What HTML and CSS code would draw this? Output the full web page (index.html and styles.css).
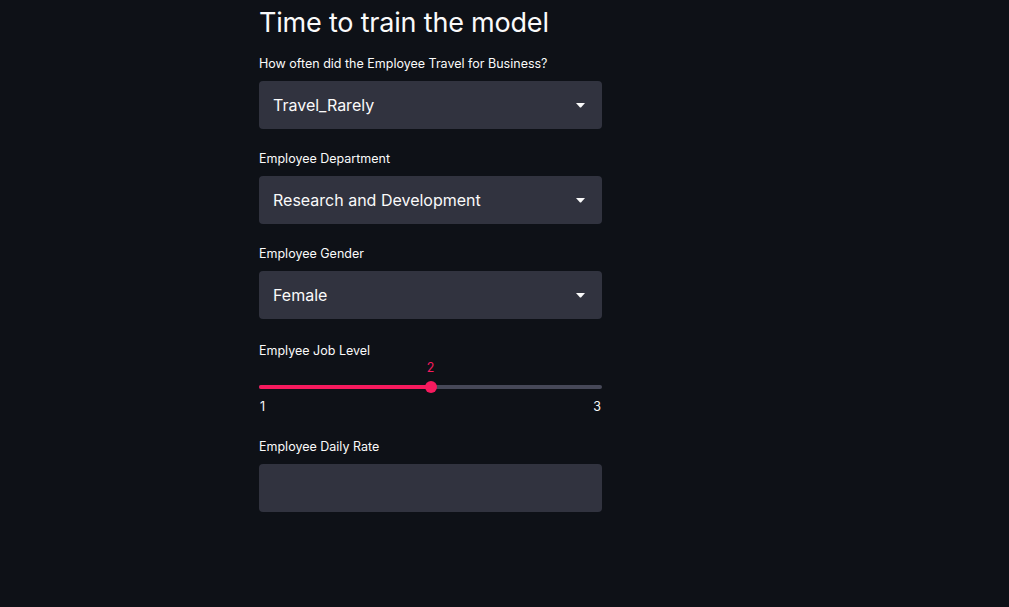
FILE: index.html
```html
<!DOCTYPE html>
<html lang="en">
<head>
<meta charset="utf-8">
<title>Time to train the model</title>
<link rel="stylesheet" href="styles.css">
</head>
<body>
<main class="main">
  <h1 class="title">Time to train the model</h1>

  <div class="field">
    <label class="label">How often did the Employee Travel for Business?</label>
    <div class="select">
      <span class="select-value">Travel_Rarely</span>
      <svg class="caret" width="9" height="5" viewBox="0 0 9 5"><path d="M0 0 H9 L5 4.5 H4 Z" fill="#fafafa"/></svg>
    </div>
  </div>

  <div class="field">
    <label class="label">Employee Department</label>
    <div class="select">
      <span class="select-value">Research and Development</span>
      <svg class="caret" width="9" height="5" viewBox="0 0 9 5"><path d="M0 0 H9 L5 4.5 H4 Z" fill="#fafafa"/></svg>
    </div>
  </div>

  <div class="field">
    <label class="label">Employee Gender</label>
    <div class="select">
      <span class="select-value">Female</span>
      <svg class="caret" width="9" height="5" viewBox="0 0 9 5"><path d="M0 0 H9 L5 4.5 H4 Z" fill="#fafafa"/></svg>
    </div>
  </div>

  <div class="field slider-field">
    <label class="label">Emplyee Job Level</label>
    <div class="slider">
      <div class="slider-value-row">
        <span class="slider-value" style="left: 50%">2</span>
      </div>
      <div class="track">
        <div class="track-fill" style="width: 50%"></div>
        <div class="thumb" style="left: 50%"></div>
      </div>
      <div class="ticks">
        <span>1</span>
        <span>3</span>
      </div>
    </div>
  </div>

  <div class="field">
    <label class="label">Employee Daily Rate</label>
    <div class="input"></div>
  </div>
</main>
</body>
</html>
```

FILE: styles.css
```css
html, body {
  margin: 0;
  padding: 0;
  background: #0e1117;
  height: 100%;
}

body {
  font-family: "Inter", "Noto Sans", sans-serif;
  color: #fafafa;
}

.main {
  width: 343px;
  margin-left: 259px;
  display: flex;
  flex-direction: column;
  gap: 20px;
}

.title {
  margin: 0 0 -6px;
  padding-top: 6px;
  font-size: 27px;
  font-weight: 400;
  line-height: 34px;
  letter-spacing: -0.2px;
}

.field {
  display: flex;
  flex-direction: column;
  gap: 7px;
}

.label {
  font-size: 12.5px;
  line-height: 20px;
  color: #fafafa;
}

.select,
.input {
  height: 48px;
  background: #31333f;
  border-radius: 4px;
  box-sizing: border-box;
}

.select {
  display: flex;
  align-items: center;
  justify-content: space-between;
  padding: 0 17px 0 14px;
}

.select-value {
  font-size: 16px;
}

.caret {
  display: block;
  margin-top: 1px;
}

.slider-field {
  gap: 0;
  margin-top: 2px;
  margin-bottom: 2px;
}

.slider {
  display: flex;
  flex-direction: column;
}

.slider-value-row {
  position: relative;
  height: 14px;
}

.slider-value {
  position: absolute;
  top: 0;
  transform: translateX(-50%);
  font-size: 12.5px;
  line-height: 14px;
  color: #f71a5e;
}

.track {
  position: relative;
  height: 4px;
  margin-top: 10px;
  background: #464858;
  border-radius: 2px;
}

.track-fill {
  height: 100%;
  background: #f71a5e;
  border-radius: 2px;
}

.thumb {
  position: absolute;
  top: 50%;
  width: 12px;
  height: 12px;
  border-radius: 50%;
  background: #f71a5e;
  transform: translate(-50%, -50%);
}

.ticks {
  display: flex;
  justify-content: space-between;
  margin-top: 10px;
  font-size: 12.5px;
  line-height: 16px;
  padding: 0 1px;
}
```
